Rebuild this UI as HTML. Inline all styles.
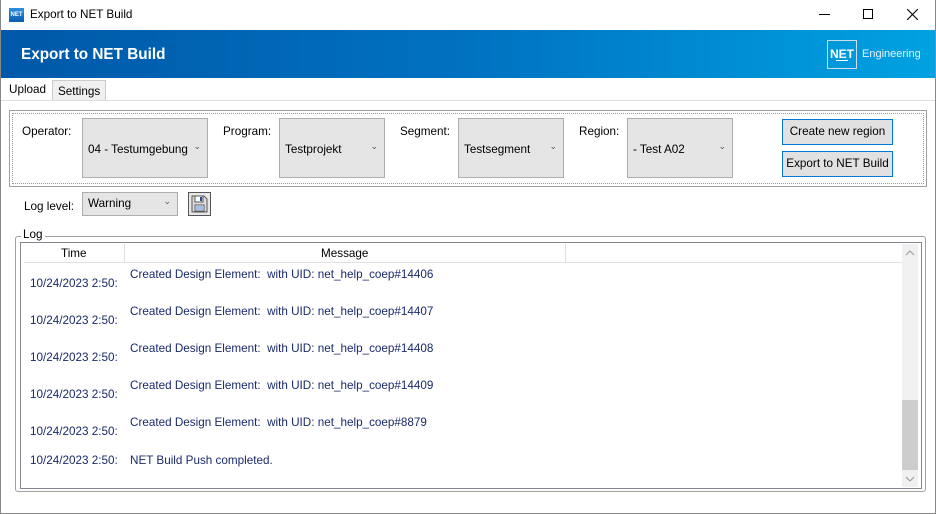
<!DOCTYPE html>
<html><head><meta charset="utf-8"><style>
*{margin:0;padding:0;box-sizing:border-box}
body{width:936px;height:514px;overflow:hidden;background:#fff;font-family:"Liberation Sans",sans-serif;font-size:11.7px;color:#000;position:relative}
.a{position:absolute}
.combo{position:absolute;background:#e5e5e5;border:1px solid #adadad;font-size:11.7px}
.combo .t{position:absolute;left:5px}
.combo .v{position:absolute;font-size:9px;color:#555}
.btn{position:absolute;background:#e1e1e1;border:1px solid #0078d7;font-size:11.7px;text-align:center;line-height:24px}
.lbl{position:absolute;font-size:11.7px}
.row{position:absolute;color:#1a2a6a;font-size:11.7px;white-space:nowrap}
</style></head><body>
<div class="a" style="left:0;top:0;width:936px;height:514px;border:1px solid #888;border-top:none"></div>
<div class="a" style="left:9px;top:8px;width:15px;height:14px;background:linear-gradient(#2f8fe0,#0a5db0);color:#fff;font-size:6px;font-weight:bold;line-height:14px;text-align:center">NET</div>
<div class="a" style="left:30px;top:8px;font-size:11.7px">Export to NET Build</div>
<div class="a" style="left:819px;top:14px;width:11px;height:1px;background:#000"></div>
<div class="a" style="left:863px;top:9px;width:10px;height:10px;border:1px solid #000"></div>
<svg class="a" style="left:907px;top:9px" width="11" height="11"><path d="M0 0L11 11M11 0L0 11" stroke="#000" stroke-width="1.1"/></svg>
<div class="a" style="left:1px;top:30px;width:934px;height:48px;background:linear-gradient(90deg,#0058a8,#0072c0 50%,#00a2e2)"></div>
<div class="a" style="left:21px;top:46px;color:#fff;font-weight:bold;font-size:15.3px">Export to NET Build</div>
<div class="a" style="left:827px;top:40px;width:30px;height:29px;border:1px solid #cde;color:#fff;font-weight:bold;font-size:12px;line-height:27px;text-align:center">NET</div>
<div class="a" style="left:836px;top:60px;width:12px;height:1px;background:#fff"></div>
<div class="a" style="left:862px;top:48px;color:#e8f4ff;font-size:11px">Engineering</div>
<div class="a" style="left:52px;top:80px;width:54px;height:21px;background:#f0f0f0;border:1px solid #ccc;border-bottom:none"></div>
<div class="a" style="left:9px;top:83px">Upload</div>
<div class="a" style="left:58px;top:85px">Settings</div>
<div class="a" style="left:1px;top:100px;width:934px;height:1px;background:#ddd"></div>
<div class="a" style="left:9px;top:110px;width:918px;height:77px;border:1px solid #a0a0a0"></div>
<div class="a" style="left:12px;top:113px;width:912px;height:71px;border:1px dotted #999"></div>
<div class="lbl" style="left:22px;top:125px">Operator:</div>
<div class="combo" style="left:82px;top:118px;width:126px;height:60px"><span class="t" style="top:24px">04 - Testumgebung</span><span class="v" style="right:6px;top:22px">&#8964;</span></div>
<div class="lbl" style="left:223px;top:125px">Program:</div>
<div class="combo" style="left:279px;top:118px;width:106px;height:60px"><span class="t" style="top:24px">Testprojekt</span><span class="v" style="right:6px;top:22px">&#8964;</span></div>
<div class="lbl" style="left:400px;top:125px">Segment:</div>
<div class="combo" style="left:458px;top:118px;width:106px;height:60px"><span class="t" style="top:24px">Testsegment</span><span class="v" style="right:6px;top:22px">&#8964;</span></div>
<div class="lbl" style="left:579px;top:125px">Region:</div>
<div class="combo" style="left:627px;top:118px;width:106px;height:60px"><span class="t" style="top:24px">- Test A02</span><span class="v" style="right:6px;top:22px">&#8964;</span></div>
<div class="btn" style="left:782px;top:119px;width:111px;height:26px">Create new region</div>
<div class="btn" style="left:782px;top:151px;width:111px;height:26px">Export to NET Build</div>
<div class="lbl" style="left:24px;top:200px">Log level:</div>
<div class="combo" style="left:82px;top:192px;width:96px;height:24px"><span class="t" style="top:4px">Warning</span><span class="v" style="right:6px;top:3px">&#8964;</span></div>
<div class="a" style="left:188px;top:192px;width:23px;height:24px;border:1px solid #555;background:#e8e8e8"></div>
<svg class="a" style="left:191px;top:195px" width="17" height="18"><path d="M1 1H13L16 4V17H1Z" fill="#ddd" stroke="#555"/><rect x="4" y="1" width="8" height="6" fill="#fff" stroke="#555"/><rect x="9" y="2" width="2" height="4" fill="#1a4fa0"/><rect x="4" y="10" width="9" height="6" fill="#fff" stroke="#555"/><path d="M5 12H12M5 14H12" stroke="#4a7fd0"/></svg>
<div class="a" style="left:15px;top:236px;width:911px;height:256px;border:1px solid #a0a0a0;border-radius:3px"></div>
<div class="a" style="left:21px;top:228px;background:#fff;padding:0 2px">Log</div>
<div class="a" style="left:20px;top:242px;width:902px;height:247px;border:1px solid #828790"></div>
<div class="a" style="left:24px;top:244px;width:878px;height:19px;background:#fff;border-bottom:1px solid #e0e0e0"></div>
<div class="a" style="left:124px;top:244px;width:1px;height:19px;background:#e0e0e0"></div>
<div class="a" style="left:565px;top:244px;width:1px;height:19px;background:#e0e0e0"></div>
<div class="a" style="left:61px;top:247px">Time</div>
<div class="a" style="left:321px;top:247px">Message</div>
<div class="a" style="left:902px;top:244px;width:16px;height:243px;background:#f0f0f0"></div>
<div class="a" style="left:902px;top:400px;width:16px;height:70px;background:#cdcdcd"></div>
<svg class="a" style="left:905px;top:249px" width="10" height="8"><path d="M1 6L5 2L9 6" fill="none" stroke="#999"/></svg>
<svg class="a" style="left:905px;top:475px" width="10" height="8"><path d="M1 2L5 6L9 2" fill="none" stroke="#999"/></svg>
<div class="row" style="left:30px;top:277px">10/24/2023 2:50:</div><div class="row" style="left:130px;top:268px">Created Design Element:&nbsp; with UID: net_help_coep#14406</div>
<div class="row" style="left:30px;top:314px">10/24/2023 2:50:</div><div class="row" style="left:130px;top:305px">Created Design Element:&nbsp; with UID: net_help_coep#14407</div>
<div class="row" style="left:30px;top:351px">10/24/2023 2:50:</div><div class="row" style="left:130px;top:342px">Created Design Element:&nbsp; with UID: net_help_coep#14408</div>
<div class="row" style="left:30px;top:388px">10/24/2023 2:50:</div><div class="row" style="left:130px;top:379px">Created Design Element:&nbsp; with UID: net_help_coep#14409</div>
<div class="row" style="left:30px;top:425px">10/24/2023 2:50:</div><div class="row" style="left:130px;top:416px">Created Design Element:&nbsp; with UID: net_help_coep#8879</div>
<div class="row" style="left:30px;top:454px">10/24/2023 2:50:</div><div class="row" style="left:130px;top:454px">NET Build Push completed.</div>
</body></html>
